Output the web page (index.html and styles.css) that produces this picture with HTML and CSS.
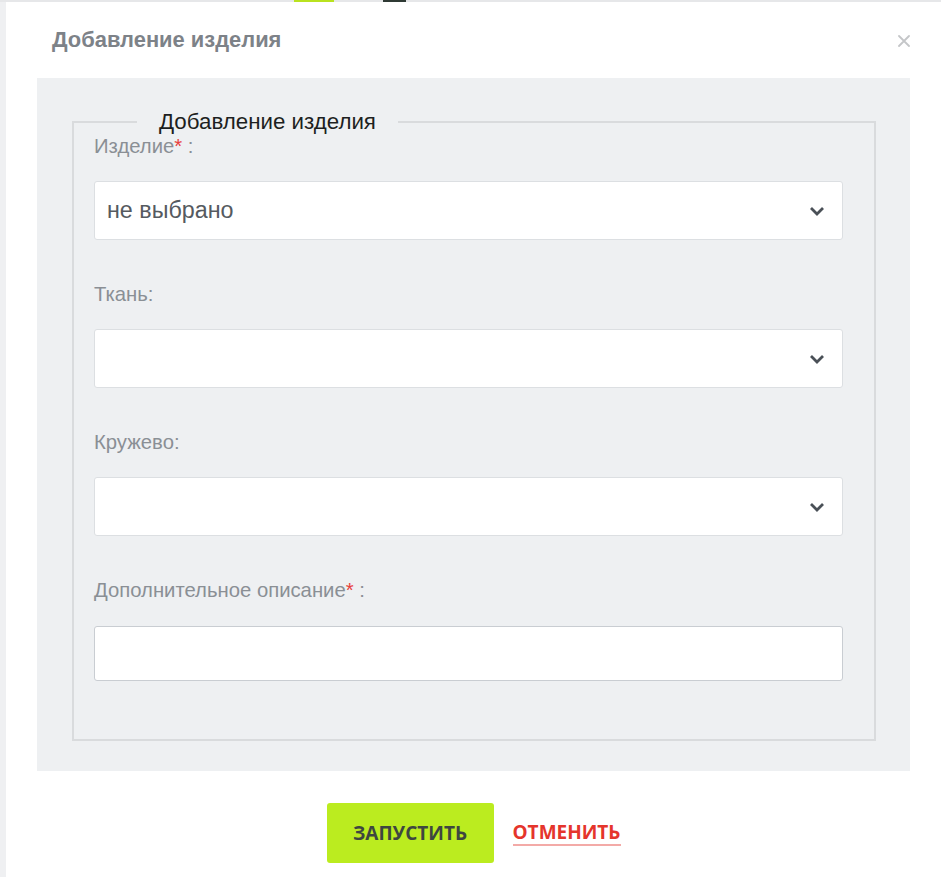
FILE: index.html
```html
<!DOCTYPE html>
<html lang="ru">
<head>
<meta charset="utf-8">
<title>Добавление изделия</title>
<link rel="stylesheet" href="styles.css">
</head>
<body>
<div class="topbar"><span class="bit bit-green"></span><span class="bit bit-dark"></span></div>
<div class="stage">
  <div class="dialog">
    <div class="dialog-header">
      <h2 class="dialog-title">Добавление изделия</h2>
      <span class="close" aria-label="Закрыть">
        <svg width="12" height="12" viewBox="0 0 12 12"><path d="M1 1 L11 11 M11 1 L1 11" stroke="#c4c6c8" stroke-width="1.8" fill="none" stroke-linecap="round"/></svg>
      </span>
    </div>
    <div class="panel">
      <fieldset class="group">
        <legend class="group-legend">Добавление изделия</legend>
        <div class="field">
          <label class="field-label">Изделие<span class="req">*</span> :</label>
          <div class="select"><span class="select-value">не выбрано</span><svg class="chev" width="16" height="10" viewBox="0 0 16 10"><polyline points="2,2 8,8 14,2" stroke="#4a5057" stroke-width="2.8" fill="none"/></svg></div>
        </div>
        <div class="field">
          <label class="field-label">Ткань:</label>
          <div class="select"><span class="select-value"></span><svg class="chev" width="16" height="10" viewBox="0 0 16 10"><polyline points="2,2 8,8 14,2" stroke="#4a5057" stroke-width="2.8" fill="none"/></svg></div>
        </div>
        <div class="field">
          <label class="field-label">Кружево:</label>
          <div class="select"><span class="select-value"></span><svg class="chev" width="16" height="10" viewBox="0 0 16 10"><polyline points="2,2 8,8 14,2" stroke="#4a5057" stroke-width="2.8" fill="none"/></svg></div>
        </div>
        <div class="field field-last">
          <label class="field-label">Дополнительное описание<span class="req">*</span> :</label>
          <div class="input"></div>
        </div>
      </fieldset>
    </div>
    <div class="dialog-footer">
      <button class="btn-run">ЗАПУСТИТЬ</button>
      <a class="link-cancel" href="#">ОТМЕНИТЬ</a>
    </div>
  </div>
</div>
</body>
</html>
```
FILE: styles.css
```css
html, body {
  margin: 0;
  padding: 0;
}
body {
  background: #eff0f2;
  font-family: "Liberation Sans", Arial, sans-serif;
  width: 941px;
  height: 877px;
  overflow: hidden;
}
.topbar {
  height: 2px;
  display: flex;
  background: #e6e7e9;
}
.bit {
  display: block;
  height: 2px;
}
.bit-green {
  width: 40px;
  margin-left: 294px;
  background: #b9e21f;
}
.bit-dark {
  width: 23px;
  margin-left: 49px;
  background: #2f3a34;
}
.stage {
  padding-left: 6px;
}
.dialog {
  background: #fff;
  height: 875px;
  display: flex;
  flex-direction: column;
}
.dialog-header {
  display: flex;
  align-items: center;
  justify-content: space-between;
  padding: 24px 31px 24px 46px;
  height: 28px;
}
.dialog-title {
  margin: 0;
  font-size: 21.9px;
  line-height: 28px;
  font-weight: 700;
  color: #7d8288;
}
.close {
  display: flex;
  width: 12px;
  height: 12px;
  margin-top: 2px;
}
.panel {
  margin: 0 31px;
  background: #eef0f2;
  padding: 31px 34px 30px 35px;
}
.group {
  margin: 0;
  border: 2px solid #d9dbdd;
  padding: 0 31px 58px 20px;
  min-width: 0;
}
.group-legend {
  margin-left: 43px;
  padding: 0 22px;
  font-size: 22.3px;
  line-height: 25px;
  color: #1d1f21;
}
.field {
  margin-bottom: 42px;
}
.field-last {
  margin-bottom: 0;
}
.field-last .field-label {
  margin-bottom: 24px;
}
.field-label {
  display: block;
  font-size: 20.3px;
  line-height: 24px;
  color: #8a8f95;
  margin-bottom: 23px;
}
.req {
  color: #e8403d;
}
.select {
  height: 57px;
  background: #fff;
  border: 1px solid #dcdfe2;
  border-radius: 3px;
  display: flex;
  align-items: center;
  justify-content: space-between;
  padding: 0 17px 0 12px;
}
.select-value {
  font-size: 23.3px;
  color: #555a60;
}
.chev {
  display: block;
}
.input {
  height: 53px;
  background: #fff;
  border: 1px solid #c9cdd2;
  border-radius: 3px;
}
.dialog-footer {
  display: flex;
  justify-content: center;
  align-items: center;
  padding-top: 32px;
  gap: 19px;
}
.btn-run {
  width: 167px;
  height: 60px;
  border: none;
  border-radius: 3px;
  background: #bbec1f;
  color: #3e4640;
  font-family: "Open Sans", sans-serif;
  font-weight: 700;
  font-size: 19px;
  padding: 0;
}
.link-cancel {
  font-family: "Open Sans", sans-serif;
  font-weight: 700;
  font-size: 19px;
  color: #e5352c;
  text-decoration: none;
  border-bottom: 2px solid #f3aaa7;
  line-height: 24px;
  padding-bottom: 0;
}
```
